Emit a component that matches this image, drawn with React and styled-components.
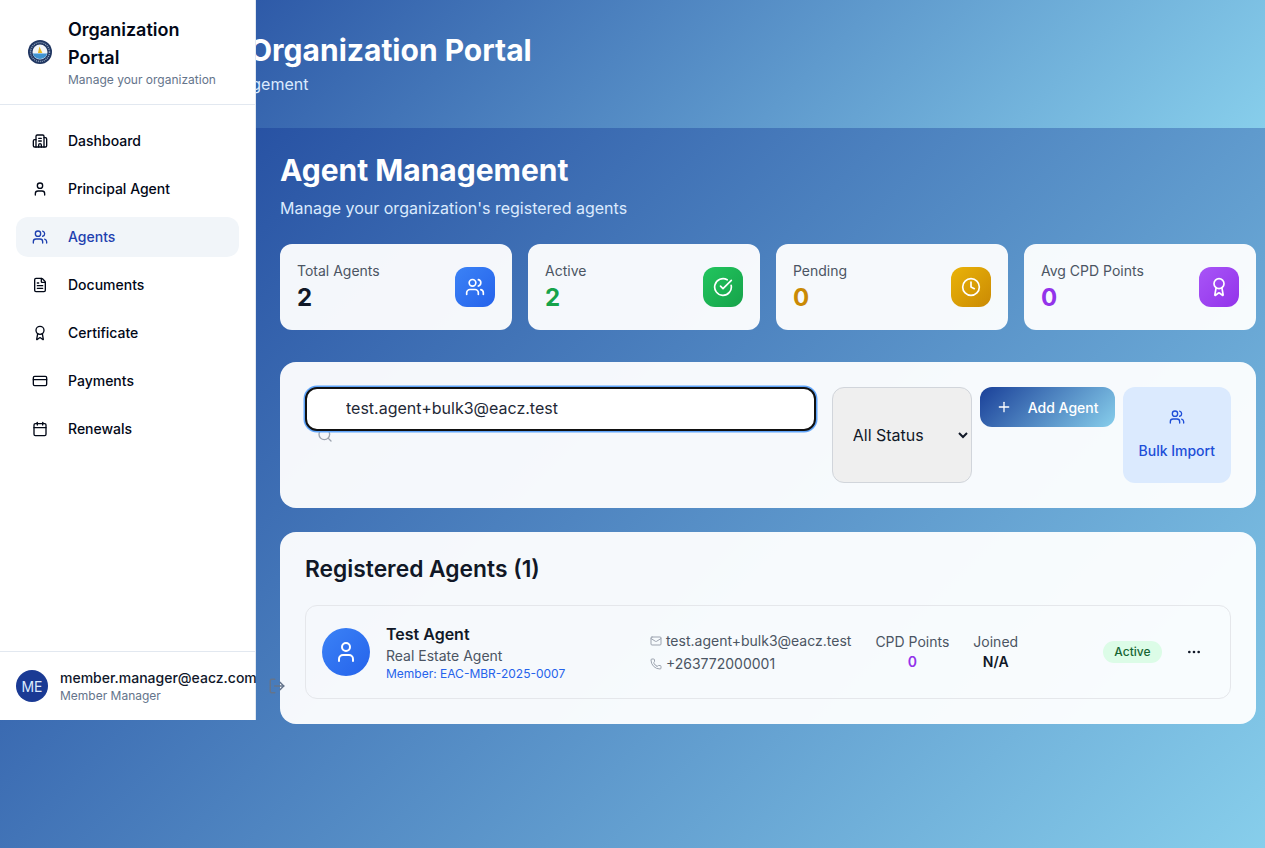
import React from 'react';
import styled, { createGlobalStyle } from 'styled-components';
import {
  Award,
  Building2,
  Calendar,
  CircleCheckBig,
  Clock,
  CreditCard,
  FileText,
  LogOut,
  Mail,
  MoreHorizontal,
  Phone,
  Plus,
  Search,
  User,
  Users,
} from 'lucide-react';

const navItems = [
  { label: 'Dashboard', icon: Building2 },
  { label: 'Principal Agent', icon: User },
  { label: 'Agents', icon: Users, active: true },
  { label: 'Documents', icon: FileText },
  { label: 'Certificate', icon: Award },
  { label: 'Payments', icon: CreditCard },
  { label: 'Renewals', icon: Calendar },
];

const stats = [
  { label: 'Total Agents', value: '2', color: '#111827', from: '#3b82f6', to: '#2563eb', icon: Users },
  { label: 'Active', value: '2', color: '#16a34a', from: '#22c55e', to: '#16a34a', icon: CircleCheckBig },
  { label: 'Pending', value: '0', color: '#ca8a04', from: '#eab308', to: '#ca8a04', icon: Clock },
  { label: 'Avg CPD Points', value: '0', color: '#9333ea', from: '#a855f7', to: '#9333ea', icon: Award },
];

const GlobalStyle = createGlobalStyle`
  * {
    box-sizing: border-box;
  }
  html,
  body {
    margin: 0;
    padding: 0;
    overflow: hidden;
  }
  body {
    font-family: Inter, 'Liberation Sans', sans-serif;
    color: #111827;
  }
`;

const Page = styled.div`
  position: relative;
  width: 1265px;
  height: 848px;
  overflow: hidden;
`;

const Sidebar = styled.aside`
  position: absolute;
  top: 0;
  left: 0;
  width: 256px;
  height: 720px;
  display: flex;
  flex-direction: column;
  background: #fff;
  border-right: 1px solid #e2e8f0;
`;

const Brand = styled.div`
  display: flex;
  align-items: center;
  height: 105px;
  padding: 16px;
  border-bottom: 1px solid #e2e8f0;
`;

const Logo = styled.svg`
  flex: none;
  width: 24px;
  height: 24px;
  margin: 0 16px 0 12px;
`;

const BrandText = styled.div`
  width: 150px;
`;

const BrandTitle = styled.div`
  font-size: 18px;
  font-weight: 600;
  line-height: 28px;
  color: #020817;
`;

const BrandSub = styled.div`
  font-size: 12px;
  line-height: 16px;
  color: #64748b;
`;

const Nav = styled.nav`
  flex: 1;
  display: flex;
  flex-direction: column;
  gap: 8px;
  padding: 16px;
`;

const NavItem = styled.a`
  display: flex;
  align-items: center;
  gap: 20px;
  height: 40px;
  padding: 0 16px;
  border-radius: 12px;
  font-size: 14px;
  font-weight: 500;
  line-height: 20px;
  color: ${p => (p.$active ? '#1e40af' : '#020817')};
  background: ${p => (p.$active ? '#f1f5f9' : 'transparent')};
`;

const UserBar = styled.div`
  display: flex;
  align-items: center;
  gap: 12px;
  height: 69px;
  padding: 0 16px;
  border-top: 1px solid #e2e8f0;
`;

const UserAvatar = styled.div`
  flex: none;
  display: flex;
  align-items: center;
  justify-content: center;
  width: 32px;
  height: 32px;
  border-radius: 50%;
  background: #1a3a94;
  color: #dbeafe;
  font-size: 14px;
`;

const UserText = styled.div`
  flex: none;
`;

const UserName = styled.div`
  font-size: 14px;
  font-weight: 500;
  line-height: 20px;
  color: #0f172a;
`;

const UserRole = styled.div`
  font-size: 12px;
  line-height: 16px;
  color: #64748b;
`;

const LogoutIcon = styled(LogOut)`
  flex: none;
  margin-left: -1px;
  color: #64748b;
`;

const TopBar = styled.header`
  height: 128px;
  padding: 32px;
  color: #fff;
  background: linear-gradient(135deg, #1a4099 0%, #87ceeb 100%);
`;

const TopTitle = styled.h1`
  margin: 0 0 4px 217px;
  font-size: 30px;
  font-weight: 700;
  line-height: 36px;
`;

const TopSub = styled.p`
  margin: 0 0 0 128px;
  font-size: 16px;
  line-height: 24px;
  color: #dbeafe;
`;

const Main = styled.main`
  height: 720px;
  padding: 24px 9px 0 280px;
  background: linear-gradient(135deg, #1a4099 0%, #87ceeb 100%);
`;

const PageTitle = styled.h2`
  margin: 0 0 8px;
  font-size: 30px;
  font-weight: 700;
  line-height: 36px;
  color: #fff;
`;

const PageSub = styled.p`
  margin: 0 0 24px;
  font-size: 16px;
  line-height: 24px;
  color: #dbeafe;
`;

const StatGrid = styled.div`
  display: grid;
  grid-template-columns: repeat(4, 1fr);
  gap: 16px;
  margin-bottom: 32px;
`;

const StatCard = styled.div`
  display: flex;
  align-items: center;
  justify-content: space-between;
  height: 86px;
  padding: 0 17px;
  border-radius: 12px;
  background: rgba(255, 255, 255, 0.95);
`;

const StatText = styled.div`
  align-self: flex-start;
  padding-top: 17px;
`;

const StatLabel = styled.div`
  font-size: 14px;
  line-height: 20px;
  color: #4b5563;
`;

const StatValue = styled.div`
  margin-top: 1px;
  font-size: 24px;
  font-weight: 700;
  line-height: 32px;
  color: ${p => p.$color};
`;

const StatIcon = styled.div`
  display: flex;
  align-items: center;
  justify-content: center;
  width: 40px;
  height: 40px;
  border-radius: 12px;
  color: #fff;
  background: linear-gradient(135deg, ${p => p.$from}, ${p => p.$to});
`;

const Panel = styled.section`
  padding: ${p => p.$padding};
  border-radius: 16px;
  background: rgba(255, 255, 255, 0.95);
  margin-bottom: 24px;
`;

const Toolbar = styled.div`
  display: flex;
  align-items: stretch;
  gap: 16px;
`;

const SearchWrap = styled.div`
  position: relative;
  flex: 1;
`;

const SearchIcon = styled(Search)`
  position: absolute;
  top: 50%;
  left: 12px;
  transform: translateY(-50%);
  color: #9ca3af;
`;

const SearchInput = styled.input`
  position: relative;
  display: block;
  width: 100%;
  height: 44px;
  padding: 0 12px 2px 39px;
  border: 2px solid #111;
  border-radius: 12px;
  outline: none;
  box-shadow: 0 0 0 1.5px #60a5fa;
  background: #fff;
  font: 16px Inter, 'Liberation Sans', sans-serif;
  color: #1f2937;
`;

const Actions = styled.div`
  display: flex;
  align-items: flex-start;
  gap: 8px;
`;

const StatusSelect = styled.select`
  align-self: stretch;
  width: 140px;
  padding: 12px 16px;
  border: 1px solid #d1d5db;
  border-radius: 12px;
  background-color: #efefef;
  font: 16px Inter, 'Liberation Sans', sans-serif;
  color: #111827;
`;

const AddButton = styled.button`
  display: flex;
  align-items: center;
  gap: 16px;
  height: 40px;
  padding: 0 16px;
  border: 0;
  border-radius: 12px;
  background: linear-gradient(135deg, #1a4099 0%, #87ceeb 100%);
  font: 500 14px Inter, 'Liberation Sans', sans-serif;
  color: #fff;
`;

const ImportButton = styled.button`
  display: flex;
  flex-direction: column;
  align-items: center;
  gap: 16px;
  padding: 22px 16px;
  border: 0;
  border-radius: 12px;
  background: #dbeafe;
  font: 500 14px/20px Inter, 'Liberation Sans', sans-serif;
  color: #1d4ed8;
`;

const PanelTitle = styled.h3`
  margin: 0 0 25px;
  padding-top: 1px;
  height: 24px;
  font-size: 22.8px;
  font-weight: 600;
  line-height: 24px;
  color: #111827;
`;

const AgentRow = styled.div`
  display: flex;
  align-items: center;
  justify-content: space-between;
  height: 94px;
  padding: 0 16px;
  border: 1px solid #e5e7eb;
  border-radius: 12px;
`;

const AgentMain = styled.div`
  display: flex;
  align-items: center;
  gap: 16px;
`;

const AgentAvatar = styled.div`
  display: flex;
  align-items: center;
  justify-content: center;
  width: 48px;
  height: 48px;
  border-radius: 50%;
  color: #fff;
  background: linear-gradient(135deg, #3b82f6, #2563eb);
`;

const AgentName = styled.div`
  font-size: 16px;
  font-weight: 600;
  line-height: 24px;
  color: #111827;
`;

const AgentRole = styled.div`
  font-size: 14px;
  line-height: 20px;
  color: #4b5563;
`;

const AgentMember = styled.div`
  font-size: 12px;
  line-height: 16px;
  color: #2563eb;
`;

const AgentMiddle = styled.div`
  display: flex;
  align-items: center;
  gap: 24px;
`;

const Contact = styled.div`
  display: flex;
  flex-direction: column;
  gap: 3px;
`;

const ContactLine = styled.div`
  display: flex;
  align-items: center;
  gap: 4px;
  font-size: 14px;
  line-height: 20px;
  color: #4b5563;
  svg {
    color: #9ca3af;
  }
`;

const Metric = styled.div`
  text-align: center;
  font-size: 14px;
  line-height: 20px;
`;

const MetricLabel = styled.div`
  color: #4b5563;
`;

const MetricValue = styled.div`
  font-weight: 600;
  color: ${p => p.$color};
`;

const AgentEnd = styled.div`
  display: flex;
  align-items: center;
  gap: 16px;
  padding-right: 4px;
`;

const StatusPill = styled.span`
  padding: 3px 11.5px;
  border-radius: 999px;
  background: #dcfce7;
  font-size: 12px;
  font-weight: 500;
  line-height: 16px;
  color: #166534;
`;

const MoreButton = styled.button`
  display: flex;
  padding: 8px;
  border: 0;
  background: transparent;
  color: #111827;
`;

function PortalLogo() {
  return (
    <Logo viewBox="0 0 24 24">
      <circle cx="12" cy="12" r="12" fill="#1f3560" />
      <circle cx="12" cy="12" r="9.5" fill="none" stroke="#8fa3bd" strokeWidth="1.4" strokeDasharray="1 1" />
      <circle cx="12" cy="12" r="7.5" fill="#f2f5f8" />
      <path d="M4.8 13.5h14.4a7.5 7.5 0 0 1-14.4 0z" fill="#3f93d1" />
      <path d="M11.4 6.5l3 6.5h-4.4z" fill="#e8b923" />
    </Logo>
  );
}

export default function App() {
  return (
    <Page>
      <GlobalStyle />
      <TopBar>
        <TopTitle>Organization Portal</TopTitle>
        <TopSub>Agent Management</TopSub>
      </TopBar>
      <Main>
        <PageTitle>Agent Management</PageTitle>
        <PageSub>Manage your organization's registered agents</PageSub>
        <StatGrid>
          {stats.map(({ icon: Icon, ...stat }) => (
            <StatCard key={stat.label}>
              <StatText>
                <StatLabel>{stat.label}</StatLabel>
                <StatValue $color={stat.color}>{stat.value}</StatValue>
              </StatText>
              <StatIcon $from={stat.from} $to={stat.to}>
                <Icon size={20} />
              </StatIcon>
            </StatCard>
          ))}
        </StatGrid>
        <Panel $padding="25px">
          <Toolbar>
            <SearchWrap>
              <SearchIcon size={16} />
              <SearchInput defaultValue="test.agent+bulk3@eacz.test" />
            </SearchWrap>
            <Actions>
              <StatusSelect defaultValue="all">
                <option value="all">All Status</option>
              </StatusSelect>
              <AddButton>
                <Plus size={16} />
                Add Agent
              </AddButton>
              <ImportButton>
                <Users size={16} />
                Bulk Import
              </ImportButton>
            </Actions>
          </Toolbar>
        </Panel>
        <Panel $padding="24px 25px 25px">
          <PanelTitle>Registered Agents (1)</PanelTitle>
          <AgentRow>
            <AgentMain>
              <AgentAvatar>
                <User size={24} />
              </AgentAvatar>
              <div>
                <AgentName>Test Agent</AgentName>
                <AgentRole>Real Estate Agent</AgentRole>
                <AgentMember>Member: EAC-MBR-2025-0007</AgentMember>
              </div>
            </AgentMain>
            <AgentMiddle>
              <Contact>
                <ContactLine>
                  <Mail size={12} />
                  test.agent+bulk3@eacz.test
                </ContactLine>
                <ContactLine>
                  <Phone size={12} />
                  +263772000001
                </ContactLine>
              </Contact>
              <Metric>
                <MetricLabel>CPD Points</MetricLabel>
                <MetricValue $color="#9333ea">0</MetricValue>
              </Metric>
              <Metric>
                <MetricLabel>Joined</MetricLabel>
                <MetricValue $color="#111827">N/A</MetricValue>
              </Metric>
            </AgentMiddle>
            <AgentEnd>
              <StatusPill>Active</StatusPill>
              <MoreButton>
                <MoreHorizontal size={16} />
              </MoreButton>
            </AgentEnd>
          </AgentRow>
        </Panel>
      </Main>
      <Sidebar>
        <Brand>
          <PortalLogo />
          <BrandText>
            <BrandTitle>Organization Portal</BrandTitle>
            <BrandSub>Manage your organization</BrandSub>
          </BrandText>
        </Brand>
        <Nav>
          {navItems.map(({ icon: Icon, label, active }) => (
            <NavItem key={label} $active={active}>
              <Icon size={16} />
              {label}
            </NavItem>
          ))}
        </Nav>
        <UserBar>
          <UserAvatar>ME</UserAvatar>
          <UserText>
            <UserName>member.manager@eacz.com</UserName>
            <UserRole>Member Manager</UserRole>
          </UserText>
          <LogoutIcon size={18} />
        </UserBar>
      </Sidebar>
    </Page>
  );
}
